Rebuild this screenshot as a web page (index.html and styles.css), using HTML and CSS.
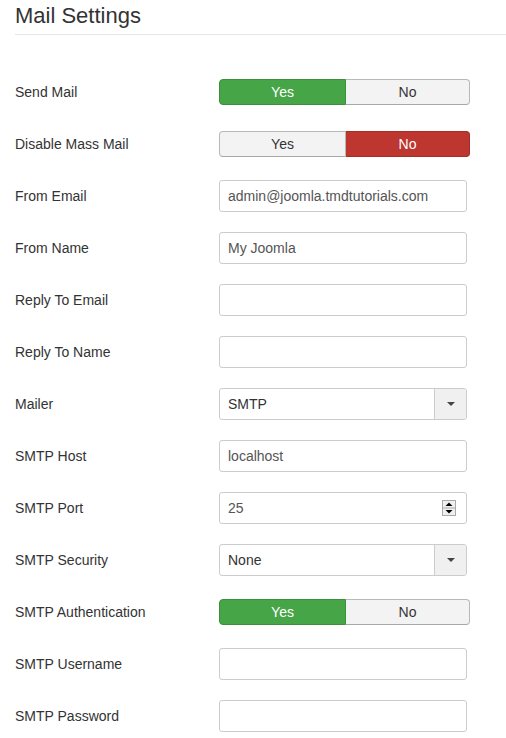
FILE: index.html
```html
<!DOCTYPE html>
<html>
<head>
<meta charset="utf-8">
<link rel="stylesheet" href="styles.css">
</head>
<body>
<div class="page">
  <h1 class="title">Mail Settings</h1>
  <div class="form">
    <div class="row">
      <div class="label">Send Mail</div>
      <div class="switch"><span class="opt on-yes">Yes</span><span class="opt">No</span></div>
    </div>
    <div class="row">
      <div class="label">Disable Mass Mail</div>
      <div class="switch"><span class="opt">Yes</span><span class="opt on-no">No</span></div>
    </div>
    <div class="row">
      <div class="label">From Email</div>
      <div class="input">admin@joomla.tmdtutorials.com</div>
    </div>
    <div class="row">
      <div class="label">From Name</div>
      <div class="input">My Joomla</div>
    </div>
    <div class="row">
      <div class="label">Reply To Email</div>
      <div class="input"></div>
    </div>
    <div class="row">
      <div class="label">Reply To Name</div>
      <div class="input"></div>
    </div>
    <div class="row">
      <div class="label">Mailer</div>
      <div class="input select"><span class="val">SMTP</span><span class="caret-box"><span class="caret"></span></span></div>
    </div>
    <div class="row">
      <div class="label">SMTP Host</div>
      <div class="input">localhost</div>
    </div>
    <div class="row">
      <div class="label">SMTP Port</div>
      <div class="input number"><span class="val">25</span>
        <svg class="spin" width="14" height="16" viewBox="0 0 14 16">
          <rect x="0.5" y="0.5" width="13" height="15" fill="#f0f0f0" stroke="#a9a9a9"/>
          <line x1="1" y1="8" x2="13" y2="8" stroke="#a9a9a9"/>
          <path d="M3.5 6 L7 2.5 L10.5 6 Z" fill="#000"/>
          <path d="M3.5 10 L7 13.5 L10.5 10 Z" fill="#000"/>
        </svg>
      </div>
    </div>
    <div class="row">
      <div class="label">SMTP Security</div>
      <div class="input select"><span class="val">None</span><span class="caret-box"><span class="caret"></span></span></div>
    </div>
    <div class="row">
      <div class="label">SMTP Authentication</div>
      <div class="switch"><span class="opt on-yes">Yes</span><span class="opt">No</span></div>
    </div>
    <div class="row">
      <div class="label">SMTP Username</div>
      <div class="input"></div>
    </div>
    <div class="row">
      <div class="label">SMTP Password</div>
      <div class="input"></div>
    </div>
  </div>
</div>
</body>
</html>
```

FILE: styles.css
```css
html, body {
  margin: 0;
  padding: 0;
  background: #fff;
}
body {
  font-family: "Liberation Sans", Arial, sans-serif;
  color: #333;
  font-size: 14px;
}
.page {
  padding-left: 15px;
}
.title {
  margin: 0;
  padding: 3px 0 6px 0;
  font-size: 22px;
  line-height: 25px;
  font-weight: normal;
  color: #333;
  border-bottom: 1px solid #e5e5e5;
}
.form {
  margin-top: 31px;
  display: flex;
  flex-direction: column;
}
.row {
  display: flex;
  align-items: center;
  height: 52px;
}
.label {
  width: 204px;
  flex: none;
  font-size: 14px;
  color: #333;
}
.switch {
  display: flex;
  width: 251px;
  height: 26px;
  box-sizing: border-box;
}
.opt {
  flex: none;
  display: flex;
  align-items: center;
  justify-content: center;
  box-sizing: border-box;
  height: 26px;
  background: #f3f3f3;
  border: 1px solid #b8b8b8;
  border-bottom-color: #a8a8a8;
  color: #333;
  font-size: 14px;
}
.opt:first-child {
  width: 127px;
  border-radius: 4px 0 0 4px;
}
.opt:last-child {
  width: 124px;
  border-left: none;
  border-radius: 0 4px 4px 0;
}
.opt.on-yes {
  background: #46a546;
  border-color: #3b8f3b;
  color: #fff;
}
.opt.on-no {
  background: #bd362f;
  border-color: #a52e28;
  color: #fff;
}
.input {
  box-sizing: border-box;
  width: 248px;
  height: 32px;
  border: 1px solid #ccc;
  border-radius: 3px;
  background: #fff;
  padding: 0 8px;
  display: flex;
  align-items: center;
  font-size: 14px;
  color: #555;
}
.select {
  padding-right: 0;
}
.select .val, .number .val {
  flex: 1;
}
.select .val {
  color: #333;
}
.caret-box {
  width: 31px;
  align-self: stretch;
  background: #f0f0f0;
  border-left: 1px solid #ccc;
  border-radius: 0 3px 3px 0;
  display: flex;
  align-items: center;
  justify-content: center;
}
.caret {
  width: 0;
  height: 0;
  border-left: 4px solid transparent;
  border-right: 4px solid transparent;
  border-top: 4px solid #444;
}
.number {
  padding-right: 10px;
}
.spin {
  display: block;
  flex: none;
}
```
